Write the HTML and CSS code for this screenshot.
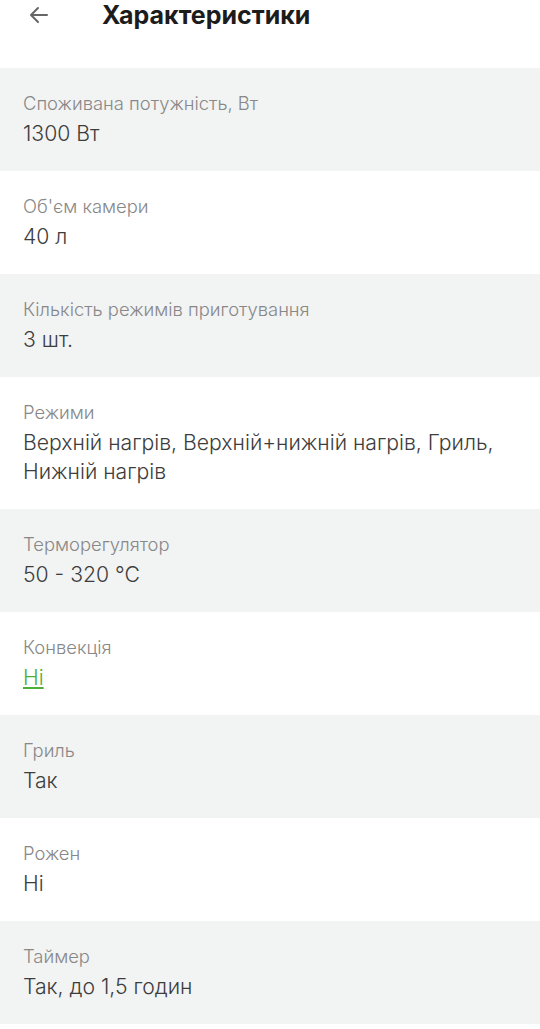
FILE: index.html
```html
<!DOCTYPE html>
<html lang="uk">
<head>
<meta charset="utf-8">
<link rel="stylesheet" href="styles.css">
</head>
<body>
<header class="header">
  <svg class="back" width="24" height="24" viewBox="0 0 24 24"><path d="M20 12H5M11 5l-7 7 7 7" fill="none" stroke="#666" stroke-width="2" stroke-linecap="round" stroke-linejoin="round"/></svg>
  <h1 class="title">Характеристики</h1>
</header>
<main class="list">
  <div class="row gray"><div class="label">Споживана потужність, Вт</div><div class="value">1300 Вт</div></div>
  <div class="row"><div class="label">Об'єм камери</div><div class="value">40 л</div></div>
  <div class="row gray"><div class="label">Кількість режимів приготування</div><div class="value">3 шт.</div></div>
  <div class="row"><div class="label">Режими</div><div class="value">Верхній нагрів, Верхній+нижній нагрів, Гриль, Нижній нагрів</div></div>
  <div class="row gray"><div class="label">Терморегулятор</div><div class="value">50 - 320 °C</div></div>
  <div class="row"><div class="label">Конвекція</div><div class="value"><a class="link" href="#">Ні</a></div></div>
  <div class="row gray"><div class="label">Гриль</div><div class="value">Так</div></div>
  <div class="row"><div class="label">Рожен</div><div class="value">Ні</div></div>
  <div class="row gray"><div class="label">Таймер</div><div class="value">Так, до 1,5 годин</div></div>
</main>
</body>
</html>
```
FILE: styles.css
```css
* { box-sizing: border-box; }
html, body { margin: 0; padding: 0; background: #fff; }
body { font-family: Inter, Roboto, "Noto Sans", sans-serif; color: #333; }
.header {
  height: 68px;
  display: flex;
  align-items: flex-start;
  padding-left: 27px;
}
.back { margin-top: 3px; width: 24px; height: 24px; }
.title {
  margin: 0 0 0 51px;
  font-size: 25px;
  line-height: 30px;
  font-weight: 700;
  color: #1c1c1c;
}
.list { display: flex; flex-direction: column; }
.row { padding: 19px 23px 23px; }
.row.gray { background: #f2f3f3; }
.label { font-size: 18.4px; line-height: 32px; color: #888; font-weight: 300; }
.value { font-size: 21.2px; line-height: 29px; color: #3d3d3d; font-weight: 300; }
.link { color: #4caf3a; text-decoration: underline; }
```
